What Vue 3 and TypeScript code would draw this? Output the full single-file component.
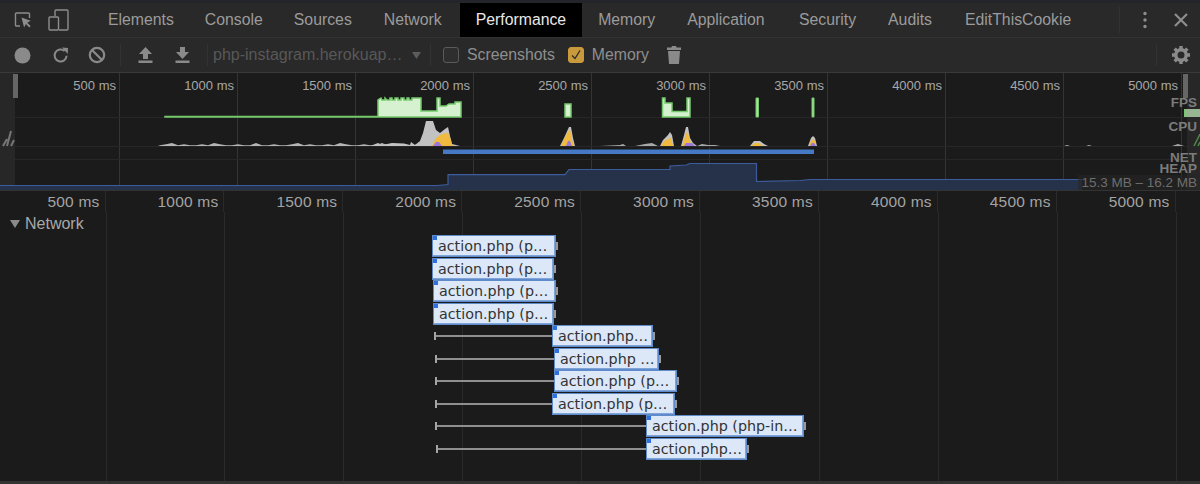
<script setup lang="ts">
const tabs = ['Elements', 'Console', 'Sources', 'Network', 'Performance', 'Memory', 'Application', 'Security', 'Audits', 'EditThisCookie']

const timeLabels = ['500 ms', '1000 ms', '1500 ms', '2000 ms', '2500 ms', '3000 ms', '3500 ms', '4000 ms', '4500 ms', '5000 ms']
const overviewLines = timeLabels.map((_, i) => 119 + i * 118)
const rulerLines = timeLabels.map((_, i) => 105.5 + i * 118.9)

// wiggly low cpu trace between 160 and 420
let lowTrace = 'M158 146'
for (let x = 160; x < 420; x += 6) {
  const h = x % 42 === 4 ? 3 : x % 18 === 4 ? 1.8 : 0.8
  lowTrace += ` L${x} ${146 - h}`
}
lowTrace += ' L420 146Z'

interface Request {
  left: number
  width: number
  whisker?: number
  label: string
}

const requests: Request[] = [
  { left: 432, width: 124, label: 'action.php (p…' },
  { left: 432, width: 122, label: 'action.php (p…' },
  { left: 433, width: 123, label: 'action.php (p…' },
  { left: 433, width: 121, label: 'action.php (p…' },
  { left: 552, width: 101, whisker: 434, label: 'action.php…' },
  { left: 554, width: 105, whisker: 435, label: 'action.php …' },
  { left: 554, width: 123, whisker: 435, label: 'action.php (p…' },
  { left: 552, width: 123, whisker: 435, label: 'action.php (p…' },
  { left: 646, width: 158, whisker: 435, label: 'action.php (php-in…' },
  { left: 646, width: 101, whisker: 436, label: 'action.php…' },
]
</script>

<template>
  <div class="devtools">
    <header class="tabbar">
      <div class="tab-icons">
        <svg width="18" height="18" viewBox="0 0 18 18" fill="none">
          <path d="M6 15H2.500a1 1 0 0 1-1-1V3a1 1 0 0 1 1-1h12a1 1 0 0 1 1 1v4" stroke="#8d8d8d" stroke-width="1.4" />
          <path d="M7.500 6.500l2.600 10 1.800-3.600 3.400 3.600 1.400-1.400-3.500-3.400 3.500-1.900z" fill="#8d8d8d" />
        </svg>
        <svg width="21" height="22" viewBox="0 0 21 22" fill="none" stroke="#8d8d8d" stroke-width="1.4">
          <path d="M7 7V2a1 1 0 0 1 1-1h11a1 1 0 0 1 1 1v18a1 1 0 0 1-1 1h-8" />
          <rect x="1" y="8" width="9.500" height="13" rx="1" />
        </svg>
      </div>
      <nav class="tabs">
        <span v-for="tab in tabs" :key="tab" class="tab" :class="{ active: tab === 'Performance' }">{{ tab }}</span>
      </nav>
      <div class="tab-actions">
        <svg width="6" height="18" viewBox="0 0 6 18" fill="#8d8d8d">
          <circle cx="3" cy="2.500" r="1.700" />
          <circle cx="3" cy="9" r="1.700" />
          <circle cx="3" cy="15.500" r="1.700" />
        </svg>
        <svg width="14" height="14" viewBox="0 0 14 14" stroke="#8d8d8d" stroke-width="2.200">
          <path d="M1 1l12 12M13 1L1 13" />
        </svg>
      </div>
    </header>

    <div class="toolbar">
      <svg class="record" width="17" height="17" viewBox="0 0 17 17"><circle cx="8.500" cy="8.500" r="8" fill="#8a8a8a" /></svg>
      <svg class="reload" width="17" height="17" viewBox="0 0 17 17" fill="none">
        <path d="M14.600 8.800a6 6 0 1 1-2-4.800" stroke="#8a8a8a" stroke-width="2" />
        <path d="M10 .6l6 .4-.2 6z" fill="#8a8a8a" />
      </svg>
      <svg class="clear" width="18" height="18" viewBox="0 0 18 18" fill="none" stroke="#8a8a8a" stroke-width="2.200">
        <circle cx="9" cy="9" r="7.200" />
        <path d="M4 4l10 10" />
      </svg>
      <i class="sep first"></i>
      <svg class="upload" width="15" height="16" viewBox="0 0 15 16" fill="#8a8a8a">
        <path d="M7.500 0L14 7H10v5H5V7H1zM.5 13.500h14V16H.5z" />
      </svg>
      <svg class="download" width="15" height="16" viewBox="0 0 15 16" fill="#8a8a8a">
        <path d="M5 0h5v5h4l-6.500 7L1 5h4zM.5 13.500h14V16H.5z" />
      </svg>
      <i class="sep second"></i>
      <div class="target">
        <span>php-instagram.herokuap…</span>
        <svg width="9" height="7" viewBox="0 0 9 7" fill="#5c5c5c"><path d="M0 0h9L4.500 7z" /></svg>
      </div>
      <i class="sep third"></i>
      <label class="check"><i class="box"></i>Screenshots</label>
      <label class="check mem">
        <i class="box on">
          <svg width="12" height="12" viewBox="0 0 12 12" fill="none" stroke="#2a2a2a" stroke-width="1.300"><path d="M2 6.500l3 3 5-8" /></svg>
        </i>Memory
      </label>
      <svg class="trash" width="14" height="18" viewBox="0 0 14 18" fill="#8a8a8a">
        <path d="M5 0h4l.6 1.500H14V4H0V1.500h4.400zM1 5h12l-1 13H2z" />
      </svg>
      <i class="sep right"></i>
      <svg class="gear" width="20" height="20" viewBox="0 0 20 20" fill="none">
        <circle cx="10" cy="10" r="5.200" stroke="#8a8a8a" stroke-width="3.400" />
        <path d="M10 1v18M1 10h18M3.600 3.600l12.800 12.800M16.400 3.600L3.600 16.400" stroke="#8a8a8a" stroke-width="3.400" stroke-dasharray="3 12 3" />
      </svg>
    </div>

    <section class="overview">
      <div class="overview-labels">
        <span v-for="label in timeLabels" :key="label">{{ label }}</span>
      </div>
      <svg class="overview-chart" width="1200" height="117" viewBox="0 73 1200 117">
        <rect x="0" y="73" width="15" height="117" fill="#272727" />
        <rect x="1187" y="73" width="13" height="117" fill="#272727" />
        <path v-for="x in overviewLines" :key="x" :d="`M${x + 0.5} 73V190`" stroke="#343434" />
        <path d="M0 117.500H1200M0 146.500H1200M0 159.500H1200" stroke="#272727" />
        <rect x="13" y="74" width="5" height="24" fill="#666" />
        <rect x="1183" y="74" width="5" height="24" fill="#666" />

        <!-- fps -->
        <path d="M165 116.500H378V100L381 98 382 100H385V98L387 100H390V98H392V100H395V98H398V100H401V98H404V100H407V98H409V100H412V98H421V111H437V98H440V106H446V106L449 104H455V102H461V117H165Z" fill="#d5f1cf" stroke="#74c96b" stroke-width="1.500" />
        <path d="M565 104H571V117H565ZM662.500 98V117H690V98H687V111.500H672V103H665V98Z" fill="#d5f1cf" stroke="#74c96b" stroke-width="1.500" />
        <path d="M756 98H758.500V117H756ZM812 98H814V117H812Z" fill="#a8e39f" stroke="#74c96b" stroke-width="1" />

        <!-- cpu -->
        <path :d="lowTrace" fill="#b5b5b5" />
        <path d="M370 146L378 143 382 145 392 143 404 143.500 410 145 411 142 415 145 420 141 423 133 426 121 433 121 436 130 440 133 445 129 448 127 450 136 452 144 460 146Z" fill="#c2c2c2" />
        <path d="M432 146L436 138 442 134 448 133 451 140 452 145 455 146Z" fill="#f0b93f" />
        <path d="M433 146L436 142 439 142 442 146Z" fill="#9a78d8" />
        <path d="M560 146L564 138 569 127 571 127 573 138 575 146Z" fill="#c2c2c2" />
        <path d="M561 146L564 139 569 130 570 130 572 140 574 146Z" fill="#f0b93f" />
        <path d="M566 146L568 141 570 141 572 146Z" fill="#9a78d8" />
        <path d="M600 146L620 145 623 144 626 146 635 146 645 144 652 143 658 146Z" fill="#a8a8a8" />
        <path d="M660 146L663 140 668 135 670 132 672 135 674 146Z" fill="#c2c2c2" />
        <path d="M661 146L664 141 668 139 671 138 673 146Z" fill="#f0b93f" />
        <path d="M681 146L684 135 686 127 688 127 690 138 693 143 697 146Z" fill="#c2c2c2" />
        <path d="M682 146L684 140 686 133 688 133 690 140 692 146Z" fill="#f0b93f" />
        <path d="M684 146L686 143 692 143 695 146Z" fill="#9a78d8" />
        <path d="M697 146L702 144 708 145 715 145 720 146Z" fill="#a8a8a8" />
        <path d="M750 146L754 141 760 141 764 144 768 146Z" fill="#c2c2c2" />
        <path d="M751 146L755 143 759 143 763 146Z" fill="#f0b93f" />
        <path d="M808 146L811 138 813 136 815 138 817 146Z" fill="#c2c2c2" />
        <path d="M809 146L811 141 813 139 815 141 816 146Z" fill="#f0b93f" />
        <path d="M810 146L812 143 814 143 816 146Z" fill="#9a78d8" />
        <path d="M1064 146L1067 145 1070 146ZM1086 146L1089 145 1092 146ZM1172 146L1178 144 1184 146Z" fill="#a8a8a8" />
        <path d="M3 146L7 139M7 146L11 131M11 146L14 140" stroke="#777" stroke-width="2" />
        <path d="M1194 146L1200 134M1198 146L1200 142" stroke="#4f8a4a" stroke-width="1.500" />
        <rect x="1184" y="109" width="16" height="8" fill="#97b592" />
        <rect x="1184" y="109" width="1.500" height="8" fill="#74c96b" />

        <!-- net -->
        <rect x="443" y="149.500" width="371" height="4.500" fill="#4579c6" />

        <!-- heap -->
        <path d="M0 185.500H437L448 184.500V174.700H565L569 169.500H670V166L686 165 690 163.500H756.500V181.500L800 180.500 810 179.500H1082V190H0Z" fill="#26324a" />
        <path d="M0 185.500H437L448 184.500V174.700H565L569 169.500H670V166L686 165 690 163.500H756.500V181.500L800 180.500 810 179.500H1082" fill="none" stroke="#3d5c9c" stroke-width="1.200" />
      </svg>
      <span class="track fps">FPS</span>
      <span class="track cpu">CPU</span>
      <span class="track net">NET</span>
      <span class="track heap">HEAP</span>
      <span class="heap-range">15.3 MB – 16.2 MB</span>
    </section>

    <div class="ruler">
      <span v-for="label in timeLabels" :key="label">{{ label }}</span>
    </div>

    <main class="network">
      <i v-for="x in rulerLines" :key="x" class="gridline" :style="{ left: `${x}px` }"></i>
      <div class="network-title"><i class="caret"></i>Network</div>
      <div class="rows">
        <div v-for="(req, i) in requests" :key="i" class="row">
          <i
            v-if="req.whisker"
            class="whisker"
            :style="{ left: `${req.whisker}px`, width: `${req.left - req.whisker}px` }"
          ></i>
          <i class="tail" :style="{ left: `${req.left + req.width}px` }"></i>
          <div class="request" :style="{ left: `${req.left}px`, width: `${req.width}px` }">{{ req.label }}</div>
        </div>
      </div>
    </main>
  </div>
</template>

<style>
html,
body {
  margin: 0;
  background: #1b1b1b;
}
</style>

<style scoped>
.devtools {
  width: 1200px;
  height: 484px;
  box-sizing: border-box;
  overflow: hidden;
  display: flex;
  flex-direction: column;
  border-top: 3px solid #22262a;
  background: #1b1b1b;
  font-family: 'Liberation Sans', Arial, sans-serif;
  color: #8f8f8f;
}

.tabbar {
  display: flex;
  align-items: center;
  flex: none;
  height: 35px;
  box-sizing: border-box;
  background: #292929;
  border-bottom: 1px solid #333;
}

.tab-icons {
  display: flex;
  align-items: center;
  gap: 16px;
  width: 92px;
  padding-left: 14px;
  box-sizing: border-box;
  height: 100%;
}

.tabs {
  display: flex;
  height: 100%;
  flex: 1;
}

.tab {
  display: flex;
  align-items: center;
  padding: 0 16px;
  font-size: 15.8px;
  color: #9b9b9b;
}

/* nudges: the reference font runs a little off Liberation's widths */
.tab:nth-child(2) {
  margin-left: -1px;
}

.tab:nth-child(3) {
  margin-left: -1px;
}

.tab:nth-child(5) {
  margin-left: 2px;
}

.tab:nth-child(8) {
  margin-left: 2.5px;
}

.tab:nth-child(10) {
  margin-left: 1px;
}

.tab.active {
  background: #000;
  color: #e8e8e8;
}

.tab-actions {
  display: flex;
  align-items: center;
  gap: 26px;
  height: 26px;
  padding: 0 12px 0 22px;
  border-left: 1px solid #333;
}

.toolbar {
  display: flex;
  align-items: center;
  flex: none;
  height: 35px;
  box-sizing: border-box;
  padding-left: 14px;
  background: #292929;
  border-bottom: 1px solid #3a3a3a;
}

.reload {
  margin-left: 21px;
}

.clear {
  margin-left: 19px;
}

.sep {
  flex: none;
  width: 1px;
  height: 22px;
  background: #333;
}

.sep.first {
  margin: 0 17px 0 14px;
}

.download {
  margin-left: 22px;
}

.sep.second {
  margin: 0 5px 0 17px;
}

.target {
  display: flex;
  align-items: center;
  justify-content: space-between;
  width: 217px;
  padding-right: 9px;
  box-sizing: border-box;
  font-size: 16px;
  color: #585858;
}

.sep.third {
  margin: 0 12px 0 0;
}

.check {
  display: flex;
  align-items: center;
  gap: 8px;
  font-size: 15.8px;
  color: #8f8f8f;
}

.check.mem {
  margin-left: 13px;
}

.box {
  display: flex;
  align-items: center;
  justify-content: center;
  width: 16px;
  height: 16px;
  box-sizing: border-box;
  border: 1px solid #5a5a5a;
  border-radius: 3px;
  background: #2e2e2e;
}

.box.on {
  background: #c89a3c;
  border-color: #c89a3c;
}

.trash {
  margin-left: 18px;
}

.sep.right {
  margin: 0 14px 0 auto;
}

.gear {
  margin-right: 9px;
}

.overview {
  position: relative;
  height: 117px;
  flex: none;
}

.overview-chart {
  position: absolute;
  left: 0;
  top: 0;
}

.overview-labels {
  position: relative;
  z-index: 1;
  display: grid;
  grid-template-columns: repeat(10, 118px);
  height: 24px;
  align-items: center;
  font-size: 13px;
  color: #a8a8a8;
}

.overview-labels span {
  text-align: right;
  padding-right: 2px;
}

.track {
  position: absolute;
  right: 3px;
  font-size: 13.5px;
  font-weight: 700;
  line-height: 11px;
  color: #7c7c7c;
}

.fps {
  top: 24px;
}

.cpu {
  top: 48px;
}

.net {
  top: 79px;
}

.heap {
  top: 90px;
}

.heap-range {
  position: absolute;
  right: 3px;
  top: 102px;
  padding-left: 3px;
  font-size: 13.5px;
  line-height: 15px;
  color: #6e6e6e;
  background: rgba(38, 38, 38, 0.6);
}

.ruler {
  display: grid;
  grid-template-columns: repeat(10, 118.9px);
  height: 22px;
  box-sizing: border-box;
  align-items: stretch;
  flex: none;
  margin-left: -13.4px;
  border-top: 1px solid #333;
  font-size: 15.5px;
  line-height: 21px;
  color: #a4a4a4;
  letter-spacing: 0.2px;
}

.ruler span {
  box-sizing: border-box;
  text-align: right;
  padding-right: 5px;
  border-right: 1px solid #2a2a2a;
}

.network {
  position: relative;
  flex: 1;
  border-bottom: 3px solid #333;
}

.gridline {
  position: absolute;
  top: 0;
  bottom: 0;
  width: 1px;
  background: #2a2a2a;
}

.network-title {
  position: relative;
  display: flex;
  align-items: center;
  gap: 5px;
  height: 23px;
  padding-left: 10px;
  font-size: 16px;
  color: #a8a8a8;
}

.caret {
  width: 0;
  height: 0;
  border-left: 5px solid transparent;
  border-right: 5px solid transparent;
  border-top: 8px solid #8a8a8a;
}

.rows {
  position: relative;
}

.row {
  position: relative;
  height: 22.5px;
}

.request {
  position: absolute;
  top: 0;
  height: 22px;
  box-sizing: border-box;
  padding-left: 5px;
  background: #dce8f8;
  border: 1px solid #5f8bca;
  box-shadow: inset -1px -1px 0 #7ea4d9;
  font-family: 'DejaVu Sans', sans-serif;
  font-size: 14.3px;
  line-height: 20px;
  color: #333;
  white-space: nowrap;
  overflow: hidden;
}

.request::before {
  content: '';
  position: absolute;
  left: -1px;
  top: -1px;
  width: 5px;
  height: 5px;
  background: #2f6fe0;
}

.whisker {
  position: absolute;
  top: 10px;
  height: 2px;
  background: #8f8f8f;
}

.whisker::before {
  content: '';
  position: absolute;
  left: 0;
  top: -3px;
  width: 1.5px;
  height: 8px;
  background: #a5a5a5;
}

.tail {
  position: absolute;
  top: 7px;
  width: 2px;
  height: 8px;
  background: #9a9a9a;
}
</style>
